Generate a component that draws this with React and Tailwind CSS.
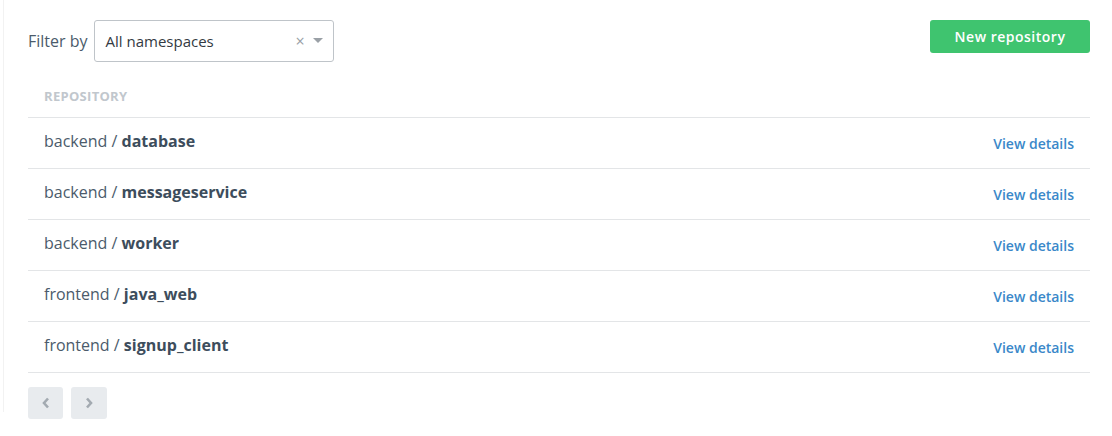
import React from "react";

const rows = [
  ["backend", "database"],
  ["backend", "messageservice"],
  ["backend", "worker"],
  ["frontend", "java_web"],
  ["frontend", "signup_client"],
];

export default function App() {
  return (
    <div
      className="w-[1112px] h-[436px] bg-white relative"
      style={{ fontFamily: '"Open Sans", sans-serif' }}
    >
      <div className="absolute left-[3px] top-0 h-[412px] w-px bg-[#f2f2f2]" />
      <div className="pt-[20px] pl-[28px] pr-[22px]">
        <div className="flex items-start justify-between">
          <div className="flex items-center">
            <span className="text-[16px] text-[#4b5b6b] mr-[6px]">Filter by</span>
            <div className="w-[240px] h-[42px] border border-[#bfc4c9] rounded-[3px] flex items-center pl-[11px] pr-[10px]">
              <span className="flex-1 text-[15px] text-[#333a42]">All namespaces</span>
              <span className="text-[#9aa0a6] text-[16px] leading-none mr-[8px]">×</span>
              <svg width="10" height="6" viewBox="0 0 10 6">
                <path d="M0 0 L10 0 L5 5 Z" fill="#9aa0a6" />
              </svg>
            </div>
          </div>
          <button className="w-[160px] h-[33px] rounded-[3px] bg-[#3fc46f] text-white text-[14px] font-semibold tracking-[0.5px]">
            New repository
          </button>
        </div>
        <div className="mt-[25px] pl-[16px] text-[13px] font-bold text-[#c1c7cd] tracking-[0.3px] h-[30px]">
          REPOSITORY
        </div>
        <div className="border-t border-[#e3e5e7]">
          {rows.map(([ns, name]) => (
            <div
              key={name}
              className="h-[51px] border-b border-[#e3e5e7] flex items-center justify-between pl-[16px] pr-[16px]"
            >
              <span className="text-[16px] text-[#4b5b6b] -mt-[4px]">
                {ns} / <span className="font-bold text-[#3d4d5c]">{name}</span>
              </span>
              <a className="text-[14px] font-semibold text-[#3a88c9]">View details</a>
            </div>
          ))}
        </div>
        <div className="flex gap-[8px] mt-[14px]">
          <button className="w-[35px] h-[32px] rounded-[3px] bg-[#e8ebee] flex items-center justify-center">
            <svg width="8" height="12" viewBox="0 0 8 12">
              <path d="M6 1.5 L2 6 L6 10.5" stroke="#a3aab1" strokeWidth="2.6" fill="none" />
            </svg>
          </button>
          <button className="w-[36px] h-[32px] rounded-[3px] bg-[#e8ebee] flex items-center justify-center">
            <svg width="8" height="12" viewBox="0 0 8 12">
              <path d="M2 1.5 L6 6 L2 10.5" stroke="#a3aab1" strokeWidth="2.6" fill="none" />
            </svg>
          </button>
        </div>
      </div>
    </div>
  );
}
